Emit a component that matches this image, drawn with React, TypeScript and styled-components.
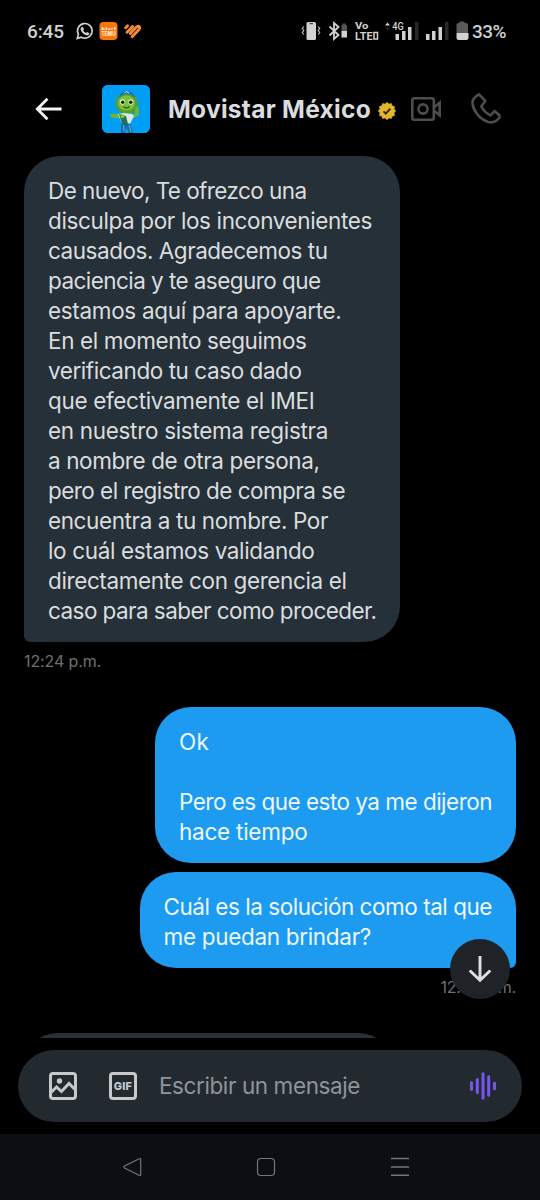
import React, { useLayoutEffect, useRef, useState } from "react";
import styled, { createGlobalStyle } from "styled-components";

const Global = createGlobalStyle`
  * { box-sizing: border-box; }
  body { margin: 0; background: #000; }
`;

const Screen = styled.main`
  width: 540px;
  height: 1200px;
  display: flex;
  flex-direction: column;
  background: #000;
  color: #dadddf;
  font-family: Inter, "Open Sans", sans-serif;
  overflow: hidden;
`;

const StatusBar = styled.div`
  height: 62px;
  flex: none;
  display: flex;
  align-items: center;
  justify-content: space-between;
  padding: 0 34px 0 27px;
  font-family: Roboto, sans-serif;
  color: #d2d2d2;
`;

const StatusGroup = styled.div`
  display: flex;
  align-items: center;
`;

const Clock = styled.div`
  font-size: 19px;
  font-weight: 500;
  width: 48px;
`;

const Percent = styled.div`
  font-size: 19px;
  font-weight: 500;
  margin-left: 3px;
  width: 34px;
  white-space: nowrap;
`;

const Header = styled.header`
  height: 94px;
  flex: none;
  display: flex;
  align-items: center;
  padding: 0 38px 0 33px;
`;

const Avatar = styled.div`
  width: 48px;
  height: 48px;
  margin-left: 39px;
  border-radius: 6px;
  overflow: hidden;
  background: #009ff5;
`;

const Title = styled.h1`
  margin: 0 0 0 18px;
  width: 204px;
  font-size: 24.5px;
  line-height: 32px;
  font-weight: 700;
`;

const Seal = styled.svg`
  margin-left: 6px;
  margin-top: 3px;
`;

const Actions = styled.div`
  display: flex;
  align-items: center;
  gap: 28px;
  margin-left: auto;
`;

const Messages = styled.section`
  height: 882px;
  flex: none;
  overflow: hidden;
  display: flex;
  flex-direction: column;
  padding: 0 24px;
  position: relative;
`;

const Bubble = styled.div<{ $mine?: boolean; $width: number; $tail?: boolean; $gap?: number }>`
  flex: none;
  width: ${(p) => p.$width}px;
  align-self: ${(p) => (p.$mine ? "flex-end" : "flex-start")};
  margin-top: ${(p) => p.$gap ?? 0}px;
  padding: 20px 24px 16px;
  background: ${(p) => (p.$mine ? "#1d9bf0" : "#253038")};
  color: ${(p) => (p.$mine ? "#eef7fd" : "#dadddf")};
  border-radius: 36px;
  ${(p) => p.$tail && (p.$mine ? "border-bottom-right-radius: 6px;" : "border-bottom-left-radius: 6px;")}
  font-size: 22.5px;
  line-height: 30px;
`;

const Line = styled.div`
  height: 30px;
  white-space: pre;
`;

const Time = styled.time<{ $mine?: boolean }>`
  flex: none;
  height: 38px;
  line-height: 38px;
  font-size: 16px;
  color: #6c7074;
  align-self: ${(p) => (p.$mine ? "flex-end" : "flex-start")};
`;

const ScrollButton = styled.button`
  position: absolute;
  left: 450px;
  top: 783px;
  width: 60px;
  height: 60px;
  padding: 0;
  border: 0;
  border-radius: 50%;
  background: #1f2328;
  display: grid;
  place-items: center;
`;

const ComposerArea = styled.div`
  height: 96px;
  flex: none;
  padding: 12px 18px;
`;

const Composer = styled.div`
  height: 72px;
  border-radius: 36px;
  background: #22292f;
  display: flex;
  align-items: center;
  padding: 0 25px 0 31px;
`;

const Placeholder = styled.div`
  margin-left: 22px;
  flex: 1;
  font-size: 22.5px;
  line-height: 30px;
  color: #90949b;
`;

const GifIcon = styled.div`
  width: 28px;
  height: 28px;
  margin-left: 32px;
  border: 3px solid #c6c9cc;
  border-radius: 4px;
  display: grid;
  place-items: center;
  color: #c6c9cc;
  font: 800 11px/12px Inter, sans-serif;
`;

const NavBar = styled.nav`
  height: 66px;
  flex: none;
  background: #0d0e13;
  display: flex;
  align-items: center;
  padding-left: 122px;
  gap: 114px;
`;

const Fitted = styled.span`
  display: inline-block;
  white-space: pre;
`;

/** Text whose tracking adapts so that it fills the given width. */
function Fit({ width, children }: { width: number; children: string }) {
  const ref = useRef<HTMLSpanElement>(null);
  const [spacing, setSpacing] = useState(0);
  useLayoutEffect(() => {
    if (ref.current) {
      const natural = ref.current.getBoundingClientRect().width;
      setSpacing((width - natural) / children.length);
    }
  }, [width, children]);
  return (
    <Fitted ref={ref} style={{ letterSpacing: spacing }}>
      {children}
    </Fitted>
  );
}

type TextLine = [string, number];

const apology: TextLine[] = [
  ["De nuevo, Te ofrezco una", 258.5],
  ["disculpa por los inconvenientes", 324],
  ["causados. Agradecemos tu", 279.5],
  ["paciencia y te aseguro que", 272.5],
  ["estamos aquí para apoyarte.", 293.5],
  ["En el momento seguimos", 258.5],
  ["verificando tu caso dado", 253.5],
  ["que efectivamente el IMEI", 266.5],
  ["en nuestro sistema registra", 280],
  ["a nombre de otra persona,", 271.5],
  ["pero el registro de compra se", 297],
  ["encuentra a tu nombre. Por", 280],
  ["lo cuál estamos validando", 266.5],
  ["directamente con gerencia el", 298.5],
  ["caso para saber como proceder.", 328.5],
];

const reply: TextLine[] = [
  ["Ok", 30],
  ["", 0],
  ["Pero es que esto ya me dijeron", 313],
  ["hace tiempo", 128.5],
];

const question: TextLine[] = [
  ["Cuál es la solución como tal que", 328.5],
  ["me puedan brindar?", 207.5],
];

function Lines({ lines }: { lines: TextLine[] }) {
  return (
    <>
      {lines.map(([text, width], i) => (
        <Line key={i}>{text && <Fit width={width}>{text}</Fit>}</Line>
      ))}
    </>
  );
}

const StatusLeftIcons = () => (
  <svg width="68" height="22" viewBox="75 20 68 22">
    <path d="M77.200 38.600l1.200-4.300a7.300 7.300 0 1 1 2.900 2.900z" fill="none" stroke="#d2d2d2" strokeWidth="1.600" />
    <path d="M81.500 27.200l1.300-.5 1.200 2.500-.8 1.200c.7 1.300 1.500 2 2.800 2.600l1.100-1 2.300 1.200c0 1.600-1.400 2.400-2.800 2.100-3-.7-5.600-3.400-6-6-.1-.9.2-1.600.9-2.100z" fill="#d2d2d2" />
    <rect x="99.500" y="22" width="18" height="18" rx="4" fill="#f9760a" />
    <path d="M102.500 27v3M101.500 29.300h3M106.300 27v3M108 29.200h2.500M112 29.500v-1.500M114.800 27v3" stroke="#ffe4cf" strokeWidth="1.500" fill="none" />
    <text x="101.300" y="36.300" fontFamily="Inter, sans-serif" fontSize="6" fontWeight="800" fill="#ffe9d8" textLength="14.500" lengthAdjust="spacingAndGlyphs">TEMU</text>
    <g stroke="#f58a35" strokeWidth="2.900" strokeLinecap="round" strokeLinejoin="round" fill="none">
      <path d="M125.600 27.800l2-2" />
      <path d="M127 32.200l5.600-5.600" />
      <path d="M130.300 33.600l5.800-6.300q2.600-2.200 3.500-.4.400 1.300-.6 2.500l-6.900 7.400" />
    </g>
  </svg>
);

const StatusRightIcons = () => (
  <svg width="168" height="24" viewBox="301 19 168 24" fill="#d2d2d2">
    <rect x="306.500" y="22" width="9.500" height="18" rx="1.500" />
    <path d="M309.500 23.700h3.500" stroke="#222" strokeWidth="1" />
    <path d="M303.800 26.500l-1.500 2 1.500 2-1.500 2 1.500 2M318.200 26.500l1.500 2-1.500 2 1.500 2-1.500 2" fill="none" stroke="#bbb" strokeWidth="1.200" />
    <path d="M329.500 26.500l9 8.500-4.500 4V23l4.500 4-9 8.500" fill="none" stroke="#d2d2d2" strokeWidth="1.800" />
    <path d="M341.500 25h1v-1.500h3V25h1.500v6h-5.500z" fill="#555" />
    <rect x="341.500" y="31" width="5.500" height="6.500" />
    <text x="355" y="28.800" fontFamily="Roboto, sans-serif" fontSize="9.800" fontWeight="700" textLength="13.500" lengthAdjust="spacingAndGlyphs">Vo</text>
    <text x="355" y="39.900" fontFamily="Roboto, sans-serif" fontSize="10.300" fontWeight="700" textLength="17.500" lengthAdjust="spacingAndGlyphs">LTE</text>
    <path d="M374 32.500h3.500v6.500H374z" fill="none" stroke="#d2d2d2" strokeWidth="1.500" />
    <path d="M385 25.500l2.500-3 2.500 3z" />
    <path d="M385 27.500l2.500 2.500 2.500-2.500z" fill="#292929" />
    <text x="392.300" y="29.600" fontFamily="Roboto, sans-serif" fontSize="10.500" fontWeight="500" textLength="11.500" lengthAdjust="spacingAndGlyphs">4G</text>
    <path d="M395.500 34h3.500v6h-3.500zM402 31h3.500v9H402zM408 27h3.500v13H408z" />
    <path d="M415 22h3.500v18H415z" fill="#292929" />
    <path d="M426 34h3.500v6H426zM432 31h3.500v9H432zM438.500 27h3.500v13h-3.500z" />
    <path d="M445 22h3.500v18H445z" fill="#292929" />
    <path d="M456.500 25q0-2 2-2h1v-1.500h5V23h1.500q2 0 2 2v8h-11.500z" fill="#5a5a5a" />
    <path d="M456.500 33H468.500v5q0 2-2 2h-8q-2 0-2-2z" />
  </svg>
);

const Mascot = () => (
  <svg width="48" height="48" viewBox="0 0 48 48" fill="none">
    <rect width="48" height="48" fill="#009ff5" />
    <ellipse cx="24.500" cy="18" rx="12" ry="11.500" fill="#2a9f9d" />
    <path d="M18 9.500q7-7.500 14 0l1 3q-8-4-16 0z" fill="#1476be" />
    <path d="M22.500 8l2-1.500L27 8" stroke="#d8f3ff" />
    <ellipse cx="25" cy="19" rx="10.500" ry="10" fill="#559f2b" />
    <ellipse cx="24.500" cy="18" rx="8.500" ry="7.500" fill="#7ac33c" />
    <ellipse cx="20.500" cy="17" rx="2.500" ry="2.800" fill="#eff5cf" />
    <ellipse cx="28.800" cy="17" rx="2.500" ry="2.800" fill="#eff5cf" />
    <circle cx="20.700" cy="17.200" r="1.800" fill="#18231a" />
    <circle cx="28.700" cy="17.200" r="1.800" fill="#18231a" />
    <path d="M21.500 21.800q3.500 2.500 6-.3" stroke="#245421" strokeWidth="1.200" />
    <path d="M10 30.500l7 .8M31 31l4-1.500v-6" stroke="#6bb832" strokeWidth="3.800" strokeLinecap="round" strokeLinejoin="round" />
    <path d="M16 29l6-1 8 1 2 2-4 8h-8z" fill="#d7ece8" />
    <path d="M17 29l7 2 2 8h-6z" fill="#237157" />
    <circle cx="20.500" cy="31.300" r="2" fill="#76cb3a" />
    <path d="M19 38.500h9l3 9.500h-4l-3-6-1 6h-4z" fill="#176ca8" />
    <path d="M21.500 40l.5 6M27 40l2 7" stroke="#65b8d7" />
  </svg>
);

const SealBadge = () => {
  const points = Array.from({ length: 24 }, (_, i) => {
    const angle = (i * Math.PI) / 12;
    const r = i % 2 ? 7.3 : 8.8;
    return `${9 + r * Math.sin(angle)},${9 - r * Math.cos(angle)}`;
  }).join(" ");
  return (
    <Seal width="18" height="18" viewBox="0 0 18 18">
      <polygon points={points} fill="#e4b62b" stroke="#e4b62b" strokeWidth=".5" strokeLinejoin="round" />
      <path d="M5.500 9.300l2.300 2.300 4.500-5" fill="none" stroke="#302608" strokeWidth="1.800" />
    </Seal>
  );
};

export default function App() {
  return (
    <Screen>
      <Global />
      <StatusBar>
        <StatusGroup>
          <Clock><Fit width={37}>6:45</Fit></Clock>
          <StatusLeftIcons />
        </StatusGroup>
        <StatusGroup>
          <StatusRightIcons />
          <Percent><Fit width={34}>33%</Fit></Percent>
        </StatusGroup>
      </StatusBar>

      <Header>
        <svg width="30" height="24" viewBox="33 97 30 24" fill="none" stroke="#f3f3f3" strokeWidth="2.800">
          <path d="M61.500 109H37.500M47.500 98.800L37.300 109l10.200 10.200" />
        </svg>
        <Avatar><Mascot /></Avatar>
        <Title><Fit width={203}>Movistar México</Fit></Title>
        <SealBadge />
        <Actions>
          <svg width="31" height="26" viewBox="411 96 31 26" fill="none" stroke="#4d4d4d" strokeWidth="2.600">
            <rect x="412.300" y="98.300" width="21.500" height="21.400" rx="2" />
            <circle cx="423" cy="109" r="4.600" />
            <path d="M434 107.200l5.700-4.500v12.600l-5.700-4.500" />
          </svg>
          <svg width="32" height="34" viewBox="470 92 32 34" fill="none" stroke="#4d4d4d" strokeWidth="2.600" strokeLinejoin="round">
            <path d="M479 94.300L485.300 101 481.300 106.200C483 110 486 113 490.500 115.300L494.600 111 499.500 115.500V117.500C496 122 492.500 123.500 487.500 121.800 479 118.500 473.500 111 472.500 103.500 472.100 99.800 473.500 97.200 479 94.300Z" />
          </svg>
        </Actions>
      </Header>

      <Messages>
        <Bubble $width={376} $tail><Lines lines={apology} /></Bubble>
        <Time><Fit width={77}>12:24 p.m.</Fit></Time>
        <Bubble $mine $width={361} $gap={27}><Lines lines={reply} /></Bubble>
        <Bubble $mine $width={376.5} $gap={9} $tail><Lines lines={question} /></Bubble>
        <Time $mine><Fit width={75.5}>12:25 p.m.</Fit></Time>
        <Bubble $width={368} $gap={27}><Line /></Bubble>
        <ScrollButton aria-label="Bajar">
          <svg width="26" height="28" viewBox="0 0 26 28" fill="none" stroke="#dedfe0" strokeWidth="2.900">
            <path d="M13 1v24M2.700 15.500L13 25.300l10.300-9.800" />
          </svg>
        </ScrollButton>
      </Messages>

      <ComposerArea>
        <Composer>
          <svg width="28" height="28" viewBox="0 0 28 28" fill="none" stroke="#c6c9cc" strokeWidth="3">
            <rect x="1.500" y="1.500" width="25" height="25" rx="2.500" />
            <path d="M2 20.500l5.500-5.500 5 4.500 7.500-8 6.500 6.500" />
            <circle cx="10.500" cy="9" r="2.700" fill="#c6c9cc" stroke="none" />
          </svg>
          <GifIcon><Fit width={18.5}>GIF</Fit></GifIcon>
          <Placeholder><Fit width={201}>Escribir un mensaje</Fit></Placeholder>
          <svg width="28" height="28" viewBox="469 1072 28 28" stroke="#7856f0" strokeWidth="3" strokeLinecap="round">
            <path d="M471.500 1082.500v7M477.300 1079.500v13M483 1073.700v24.600M488.700 1076.700v18.600M494.500 1083.300v5.400" />
          </svg>
        </Composer>
      </ComposerArea>

      <NavBar>
        <svg width="20" height="20" viewBox="0 0 20 20" fill="none" stroke="#75767a" strokeWidth="1.200">
          <path d="M17.200 1.800q1.500-.8 1.500.8v14.800q0 1.600-1.500.8L2.500 11q-1.300-1 0-2z" />
        </svg>
        <svg width="20" height="20" viewBox="0 0 20 20" fill="none" stroke="#75767a" strokeWidth="1.200">
          <rect x="1.500" y="1.500" width="17" height="17" rx="3.500" />
        </svg>
        <svg width="20" height="20" viewBox="0 0 20 20" stroke="#75767a" strokeWidth="1.400">
          <path d="M1 1.500h18M1 10h18M1 18.300h18" />
        </svg>
      </NavBar>
    </Screen>
  );
}
